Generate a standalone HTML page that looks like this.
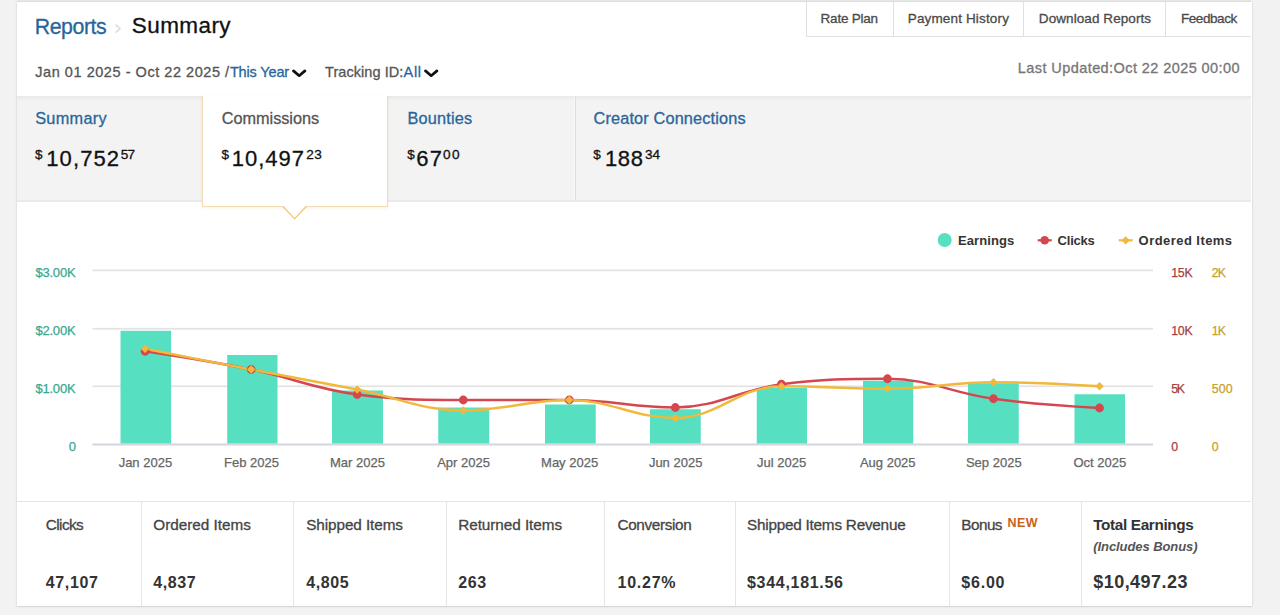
<!DOCTYPE html>
<html lang="en">
<head>
<meta charset="utf-8">
<title>Reports - Summary</title>
<style>
html,body{margin:0;padding:0}
body{width:1280px;height:615px;overflow:hidden;background:#f2f2f2;font-family:"Liberation Sans",sans-serif;position:relative}
header,nav,figure,section{display:block;margin:0;padding:0;height:0}
.abs{position:absolute}
#topline{left:17px;top:0;width:1234px;height:2px;background:#e9e9e9}
#card{left:16.5px;top:2px;width:1235px;height:603.7px;background:#fff;box-shadow:0 0 2px rgba(0,0,0,.16),0 1px 1px rgba(0,0,0,.06)}
#btns{left:806px;top:2px;width:445px;height:34.8px;border-left:1px solid #e0e0e0;border-bottom:1px solid #e0e0e0;box-sizing:border-box}
.vd{position:absolute;width:1px;background:#e0e0e0}
#tabs{left:17px;top:96px;width:1234px;height:106px;background:#f3f3f3 linear-gradient(#e8e8e8,#eeeeee 2px,#f3f3f3 5px) no-repeat;border-bottom:2px solid #eaeaea;box-sizing:border-box}
#seltab{left:202px;top:96px;width:186.4px;height:110.8px;background:#fff;border:1px solid #f0dcb4;border-top:none;box-sizing:border-box;box-shadow:0 1px 3px rgba(240,190,90,.22)}
#chart{position:absolute;left:0;top:201px;font-family:"Liberation Sans",sans-serif}
#stats{left:17px;top:501px;width:1234px;height:105px;border-top:1px solid #e4e4e4;box-sizing:border-box}
.t{position:absolute;white-space:nowrap;line-height:1;display:block}
</style>
</head>
<body>
<div id="topline" class="abs"></div>
<div id="card" class="abs"></div>
<header>
<div id="btns" class="abs"></div>
<div class="vd" style="left:893px;top:2px;height:34px"></div>
<div class="vd" style="left:1023px;top:2px;height:34px"></div>
<div class="vd" style="left:1165px;top:2px;height:34px"></div>
<svg class="abs" style="left:113px;top:22px" width="10" height="13" viewBox="113 22 10 13"><path d="M115.7 24.6L120 28.6L115.7 32.6" fill="none" stroke="#dedede" stroke-width="1.7"/></svg>
<svg class="abs" style="left:291.75px;top:68.8px" width="15" height="9" viewBox="0 0 15 9"><path d="M1.5 1.9L7.2 6.7L12.9 1.9" fill="none" stroke="#111" stroke-width="2.7" stroke-linecap="round" stroke-linejoin="round"/></svg>
<svg class="abs" style="left:423.85px;top:68.8px" width="15" height="9" viewBox="0 0 15 9"><path d="M1.5 1.9L7.2 6.7L12.9 1.9" fill="none" stroke="#111" stroke-width="2.7" stroke-linecap="round" stroke-linejoin="round"/></svg>
<span class="t" style="left:34.7px;top:16.97px;font-size:21.3px;color:#28659c;-webkit-text-stroke:0.3px;letter-spacing:-0.43px;">Reports</span>
<span class="t" style="left:131.8px;top:15.35px;font-size:22.5px;color:#111;-webkit-text-stroke:0.3px;letter-spacing:0.42px;">Summary</span>
<span class="t" style="left:35.3px;top:65.13px;font-size:14.5px;color:#555;-webkit-text-stroke:0.3px;letter-spacing:0.54px;">Jan 01 2025 - Oct 22 2025 /</span>
<span class="t" style="left:229.9px;top:65.13px;font-size:14.5px;color:#28659c;-webkit-text-stroke:0.3px;letter-spacing:-0.15px;">This Year</span>
<span class="t" style="left:325.1px;top:65.13px;font-size:14.5px;color:#555;-webkit-text-stroke:0.3px;letter-spacing:0.05px;">Tracking ID:</span>
<span class="t" style="left:403.6px;top:65.13px;font-size:14.5px;color:#28659c;-webkit-text-stroke:0.3px;letter-spacing:0.64px;">All</span>
<span class="t" style="left:820.6px;top:12.27px;font-size:13.5px;color:#4a4a4a;-webkit-text-stroke:0.3px;letter-spacing:-0.22px;">Rate Plan</span>
<span class="t" style="left:907.75px;top:12.27px;font-size:13.5px;color:#4a4a4a;-webkit-text-stroke:0.3px;letter-spacing:0.15px;">Payment History</span>
<span class="t" style="left:1038.8px;top:12.27px;font-size:13.5px;color:#4a4a4a;-webkit-text-stroke:0.3px;letter-spacing:0.08px;">Download Reports</span>
<span class="t" style="left:1181px;top:12.27px;font-size:13.5px;color:#4a4a4a;-webkit-text-stroke:0.3px;letter-spacing:-0.44px;">Feedback</span>
<span class="t" style="left:1017.8px;top:61.03px;font-size:14.5px;color:#767676;-webkit-text-stroke:0.3px;letter-spacing:0.42px;">Last Updated:Oct 22 2025 00:00</span>
</header>
<nav>
<div id="tabs" class="abs"></div>
<div class="vd" style="left:574px;top:96px;height:104px;background:#f8f8f8"></div>
<div class="vd" style="left:575px;top:96px;height:104px;background:#dcdcdc"></div>
<div id="seltab" class="abs"></div>
<svg class="abs" style="left:280px;top:204px" width="30" height="18" viewBox="280 204 30 18"><path d="M283.2 205.2H306L294.6 218.4Z" fill="#fff"/><path d="M282.9 206.5L294.6 218.7L306.3 206.5" fill="none" stroke="#f1ca80" stroke-width="1.4"/></svg>
<span class="t" style="left:35.2px;top:110.2px;font-size:16.3px;color:#28659c;-webkit-text-stroke:0.3px;letter-spacing:0.29px;">Summary</span>
<span class="t" style="left:221.8px;top:110.2px;font-size:16.3px;color:#555;-webkit-text-stroke:0.3px;letter-spacing:-0.04px;">Commissions</span>
<span class="t" style="left:407.4px;top:110.2px;font-size:16.3px;color:#28659c;-webkit-text-stroke:0.3px;letter-spacing:0.2px;">Bounties</span>
<span class="t" style="left:593.5px;top:110.2px;font-size:16.3px;color:#28659c;-webkit-text-stroke:0.3px;letter-spacing:0.15px;">Creator Connections</span>
<span class="t" style="left:35.0px;top:147.77px;font-size:13.5px;color:#111;-webkit-text-stroke:0.3px;">$</span>
<span class="t" style="left:46.2px;top:148.18px;font-size:22px;color:#111;letter-spacing:1.12px;-webkit-text-stroke:0.3px #111;">10,752</span>
<span class="t" style="left:120.8px;top:148.39px;font-size:13.6px;color:#111;-webkit-text-stroke:0.3px;letter-spacing:-0.82px;">57</span>
<span class="t" style="left:221.6px;top:147.77px;font-size:13.5px;color:#111;-webkit-text-stroke:0.3px;">$</span>
<span class="t" style="left:231.7px;top:148.18px;font-size:22px;color:#111;letter-spacing:1.02px;-webkit-text-stroke:0.3px #111;">10,497</span>
<span class="t" style="left:306.3px;top:148.39px;font-size:13.6px;color:#111;-webkit-text-stroke:0.3px;letter-spacing:0.28px;">23</span>
<span class="t" style="left:407.2px;top:147.77px;font-size:13.5px;color:#111;-webkit-text-stroke:0.3px;">$</span>
<span class="t" style="left:416.2px;top:148.18px;font-size:22px;color:#111;letter-spacing:1.22px;-webkit-text-stroke:0.3px #111;">67</span>
<span class="t" style="left:443px;top:148.39px;font-size:13.6px;color:#111;-webkit-text-stroke:0.3px;letter-spacing:1.38px;">00</span>
<span class="t" style="left:593.3px;top:147.77px;font-size:13.5px;color:#111;-webkit-text-stroke:0.3px;">$</span>
<span class="t" style="left:605.1px;top:148.18px;font-size:22px;color:#111;letter-spacing:0.54px;-webkit-text-stroke:0.3px #111;">188</span>
<span class="t" style="left:645px;top:148.39px;font-size:13.6px;color:#111;-webkit-text-stroke:0.3px;letter-spacing:-0.12px;">34</span>
</nav>
<figure>
<svg id="chart" width="1280" height="300" viewBox="0 201 1280 300">
<rect x="92.5" y="269.55" width="1060.5" height="1.7" fill="#e3e3e4"/>
<rect x="92.5" y="327.90" width="1060.5" height="1.7" fill="#e3e3e4"/>
<rect x="92.5" y="385.40" width="1060.5" height="1.7" fill="#e3e3e4"/>
<rect x="92.5" y="443.5" width="1060.5" height="2" fill="#d3d5dc"/>
<rect x="120.5" y="330.75" width="50.60" height="112.75" fill="#57dfc1"/>
<rect x="227.2" y="355" width="50.30" height="88.50" fill="#57dfc1"/>
<rect x="332" y="390.5" width="51.00" height="53.00" fill="#57dfc1"/>
<rect x="438.25" y="407.5" width="51.00" height="36.00" fill="#57dfc1"/>
<rect x="545" y="404.5" width="50.75" height="39.00" fill="#57dfc1"/>
<rect x="650" y="409.25" width="50.75" height="34.25" fill="#57dfc1"/>
<rect x="756.75" y="388" width="50.25" height="55.50" fill="#57dfc1"/>
<rect x="863" y="380.75" width="50.25" height="62.75" fill="#57dfc1"/>
<rect x="968" y="383.25" width="50.75" height="60.25" fill="#57dfc1"/>
<rect x="1074.5" y="394.25" width="50.50" height="49.25" fill="#57dfc1"/>
<path d="M145.10 351.25 C145.10 351.25 208.73 360.85 251.15 369.50 C293.57 378.15 314.78 389.00 357.20 394.50 C399.62 400.00 420.83 400.00 463.25 400.00 C505.67 400.00 526.88 400.00 569.30 400.00 C611.72 400.00 632.93 407.50 675.35 407.50 C717.77 407.50 738.98 389.75 781.40 384.25 C823.82 378.75 845.03 378.75 887.45 378.75 C929.87 378.75 951.08 392.90 993.50 398.75 C1035.92 404.60 1099.55 408.00 1099.55 408.00" fill="none" stroke="#d4474f" stroke-width="2.4" stroke-linecap="round"/>
<path d="M145.10 348.75 C145.10 348.75 208.73 361.35 251.15 369.50 C293.57 377.65 314.78 381.30 357.20 389.50 C399.62 397.70 420.83 410.50 463.25 410.50 C505.67 410.50 526.88 400.00 569.30 400.00 C611.72 400.00 632.93 418.00 675.35 418.00 C717.77 418.00 738.98 386.25 781.40 386.25 C823.82 386.25 845.03 388.75 887.45 388.75 C929.87 388.75 951.08 382.25 993.50 382.25 C1035.92 382.25 1099.55 386.25 1099.55 386.25" fill="none" stroke="#f2b83c" stroke-width="2.4" stroke-linecap="round"/>
<circle cx="145.1" cy="351.25" r="4.4" fill="#d4474f"/>
<circle cx="251.14999999999998" cy="369.5" r="4.4" fill="#d4474f"/>
<circle cx="357.2" cy="394.5" r="4.4" fill="#d4474f"/>
<circle cx="463.25" cy="400" r="4.4" fill="#d4474f"/>
<circle cx="569.3" cy="400" r="4.4" fill="#d4474f"/>
<circle cx="675.35" cy="407.5" r="4.4" fill="#d4474f"/>
<circle cx="781.4" cy="384.25" r="4.4" fill="#d4474f"/>
<circle cx="887.45" cy="378.75" r="4.4" fill="#d4474f"/>
<circle cx="993.5" cy="398.75" r="4.4" fill="#d4474f"/>
<circle cx="1099.55" cy="408" r="4.4" fill="#d4474f"/>
<path d="M145.1 344.55L149.29999999999998 348.75L145.1 352.95L140.9 348.75Z" fill="#f2b83c"/>
<path d="M251.14999999999998 365.3L255.34999999999997 369.5L251.14999999999998 373.7L246.95 369.5Z" fill="#f2b83c"/>
<path d="M357.2 385.3L361.4 389.5L357.2 393.7L353.0 389.5Z" fill="#f2b83c"/>
<path d="M463.25 406.3L467.45 410.5L463.25 414.7L459.05 410.5Z" fill="#f2b83c"/>
<path d="M569.3 395.8L573.5 400L569.3 404.2L565.0999999999999 400Z" fill="#f2b83c"/>
<path d="M675.35 413.8L679.5500000000001 418L675.35 422.2L671.15 418Z" fill="#f2b83c"/>
<path d="M781.4 382.05L785.6 386.25L781.4 390.45L777.1999999999999 386.25Z" fill="#f2b83c"/>
<path d="M887.45 384.55L891.6500000000001 388.75L887.45 392.95L883.25 388.75Z" fill="#f2b83c"/>
<path d="M993.5 378.05L997.7 382.25L993.5 386.45L989.3 382.25Z" fill="#f2b83c"/>
<path d="M1099.55 382.05L1103.75 386.25L1099.55 390.45L1095.35 386.25Z" fill="#f2b83c"/>
<circle cx="944.7" cy="240" r="7" fill="#57dfc1"/>
<rect x="1037.7" y="239.2" width="14" height="2.2" fill="#d4474f"/><circle cx="1044.7" cy="240.3" r="4.3" fill="#d4474f"/>
<rect x="1118.7" y="239.2" width="14" height="2.2" fill="#f2b83c"/><path d="M1125.7 236.2l4.1 4.1l-4.1 4.1l-4.1 -4.1z" fill="#f2b83c"/>
<text x="958" y="244.7" font-size="13" fill="#333" font-weight="700" textLength="56.3" lengthAdjust="spacing">Earnings</text>
<text x="1057.6" y="244.7" font-size="13" fill="#333" font-weight="700" textLength="37.2" lengthAdjust="spacing">Clicks</text>
<text x="1138.6" y="244.7" font-size="13" fill="#333" font-weight="700" textLength="93.5" lengthAdjust="spacing">Ordered Items</text>
<text x="35.39999999999999" y="276.9" font-size="13" fill="#3aa790" stroke="#3aa790" stroke-width="0.25" textLength="40.2" lengthAdjust="spacing">$3.00K</text>
<text x="35.39999999999999" y="335.25" font-size="13" fill="#3aa790" stroke="#3aa790" stroke-width="0.25" textLength="40.2" lengthAdjust="spacing">$2.00K</text>
<text x="35.39999999999999" y="392.75" font-size="13" fill="#3aa790" stroke="#3aa790" stroke-width="0.25" textLength="40.2" lengthAdjust="spacing">$1.00K</text>
<text x="68.69999999999999" y="451.0" font-size="13" fill="#3aa790" stroke="#3aa790" stroke-width="0.25" textLength="6.9" lengthAdjust="spacing">0</text>
<text x="1171.2" y="276.79999999999995" font-size="12.3" fill="#a54040" stroke="#a54040" stroke-width="0.25" textLength="21.5" lengthAdjust="spacing">15K</text>
<text x="1171.2" y="335.15" font-size="12.3" fill="#a54040" stroke="#a54040" stroke-width="0.25" textLength="21.5" lengthAdjust="spacing">10K</text>
<text x="1171.2" y="392.65" font-size="12.3" fill="#a54040" stroke="#a54040" stroke-width="0.25" textLength="13.8" lengthAdjust="spacing">5K</text>
<text x="1171.2" y="450.9" font-size="12.3" fill="#a54040" stroke="#a54040" stroke-width="0.25" textLength="6.2" lengthAdjust="spacing">0</text>
<text x="1211.7" y="276.79999999999995" font-size="12.3" fill="#c5a02a" stroke="#c5a02a" stroke-width="0.25" textLength="14.3" lengthAdjust="spacing">2K</text>
<text x="1211.7" y="335.15" font-size="12.3" fill="#c5a02a" stroke="#c5a02a" stroke-width="0.25" textLength="14.3" lengthAdjust="spacing">1K</text>
<text x="1211.7" y="392.65" font-size="12.3" fill="#c5a02a" stroke="#c5a02a" stroke-width="0.25" textLength="20.8" lengthAdjust="spacing">500</text>
<text x="1211.7" y="450.9" font-size="12.3" fill="#c5a02a" stroke="#c5a02a" stroke-width="0.25" textLength="6.2" lengthAdjust="spacing">0</text>
<text x="145.4" y="467" font-size="13" fill="#666" stroke="#666" stroke-width="0.25" text-anchor="middle">Jan 2025</text>
<text x="251.45" y="467" font-size="13" fill="#666" stroke="#666" stroke-width="0.25" text-anchor="middle">Feb 2025</text>
<text x="357.5" y="467" font-size="13" fill="#666" stroke="#666" stroke-width="0.25" text-anchor="middle">Mar 2025</text>
<text x="463.55" y="467" font-size="13" fill="#666" stroke="#666" stroke-width="0.25" text-anchor="middle">Apr 2025</text>
<text x="569.5999999999999" y="467" font-size="13" fill="#666" stroke="#666" stroke-width="0.25" text-anchor="middle">May 2025</text>
<text x="675.65" y="467" font-size="13" fill="#666" stroke="#666" stroke-width="0.25" text-anchor="middle">Jun 2025</text>
<text x="781.6999999999999" y="467" font-size="13" fill="#666" stroke="#666" stroke-width="0.25" text-anchor="middle">Jul 2025</text>
<text x="887.75" y="467" font-size="13" fill="#666" stroke="#666" stroke-width="0.25" text-anchor="middle">Aug 2025</text>
<text x="993.8" y="467" font-size="13" fill="#666" stroke="#666" stroke-width="0.25" text-anchor="middle">Sep 2025</text>
<text x="1099.85" y="467" font-size="13" fill="#666" stroke="#666" stroke-width="0.25" text-anchor="middle">Oct 2025</text>
</svg>
</figure>
<section>
<div id="stats" class="abs"></div>
<div class="vd" style="left:140.5px;top:502px;height:104px;background:#e6e6e6"></div>
<div class="vd" style="left:293px;top:502px;height:104px;background:#e6e6e6"></div>
<div class="vd" style="left:446px;top:502px;height:104px;background:#e6e6e6"></div>
<div class="vd" style="left:604px;top:502px;height:104px;background:#e6e6e6"></div>
<div class="vd" style="left:734.5px;top:502px;height:104px;background:#e6e6e6"></div>
<div class="vd" style="left:948.5px;top:502px;height:104px;background:#e6e6e6"></div>
<div class="vd" style="left:1080.5px;top:502px;height:104px;background:#e6e6e6"></div>
<span class="t" style="left:45.75px;top:517.05px;font-size:15.3px;color:#444;-webkit-text-stroke:0.3px;letter-spacing:-0.56px;">Clicks</span>
<span class="t" style="left:45.75px;top:574.76px;font-size:16px;color:#333;font-weight:700;letter-spacing:0.66px;">47,107</span>
<span class="t" style="left:153.25px;top:517.05px;font-size:15.3px;color:#444;-webkit-text-stroke:0.3px;letter-spacing:-0.02px;">Ordered Items</span>
<span class="t" style="left:153.25px;top:574.76px;font-size:16px;color:#333;font-weight:700;letter-spacing:0.61px;">4,837</span>
<span class="t" style="left:306.25px;top:517.05px;font-size:15.3px;color:#444;-webkit-text-stroke:0.3px;letter-spacing:-0.09px;">Shipped Items</span>
<span class="t" style="left:306.25px;top:574.76px;font-size:16px;color:#333;font-weight:700;letter-spacing:0.61px;">4,805</span>
<span class="t" style="left:458.25px;top:517.05px;font-size:15.3px;color:#444;-webkit-text-stroke:0.3px;letter-spacing:-0.06px;">Returned Items</span>
<span class="t" style="left:458.25px;top:574.76px;font-size:16px;color:#333;font-weight:700;letter-spacing:0.65px;">263</span>
<span class="t" style="left:617.5px;top:517.05px;font-size:15.3px;color:#444;-webkit-text-stroke:0.3px;letter-spacing:-0.35px;">Conversion</span>
<span class="t" style="left:617.5px;top:574.76px;font-size:16px;color:#333;font-weight:700;letter-spacing:0.75px;">10.27%</span>
<span class="t" style="left:747px;top:517.05px;font-size:15.3px;color:#444;-webkit-text-stroke:0.3px;letter-spacing:-0.23px;">Shipped Items Revenue</span>
<span class="t" style="left:747px;top:574.76px;font-size:16px;color:#333;font-weight:700;letter-spacing:0.7px;">$344,181.56</span>
<span class="t" style="left:961.25px;top:517.05px;font-size:15.3px;color:#444;-webkit-text-stroke:0.3px;letter-spacing:-0.53px;">Bonus</span>
<span class="t" style="left:1007.5px;top:517.22px;font-size:12.5px;color:#c7631c;font-weight:700;letter-spacing:0.41px;">NEW</span>
<span class="t" style="left:961.25px;top:574.76px;font-size:16px;color:#333;font-weight:700;letter-spacing:0.8px;">$6.00</span>
<span class="t" style="left:1093.25px;top:517.05px;font-size:15.3px;color:#333;font-weight:700;letter-spacing:-0.35px;">Total Earnings</span>
<span class="t" style="left:1093.25px;top:539.75px;font-size:13px;color:#555;font-weight:700;letter-spacing:-0.08px;font-style:italic;">(Includes Bonus)</span>
<span class="t" style="left:1093.25px;top:572.76px;font-size:18px;color:#333;font-weight:700;letter-spacing:0.46px;">$10,497.23</span>
</section>
</body>
</html>
